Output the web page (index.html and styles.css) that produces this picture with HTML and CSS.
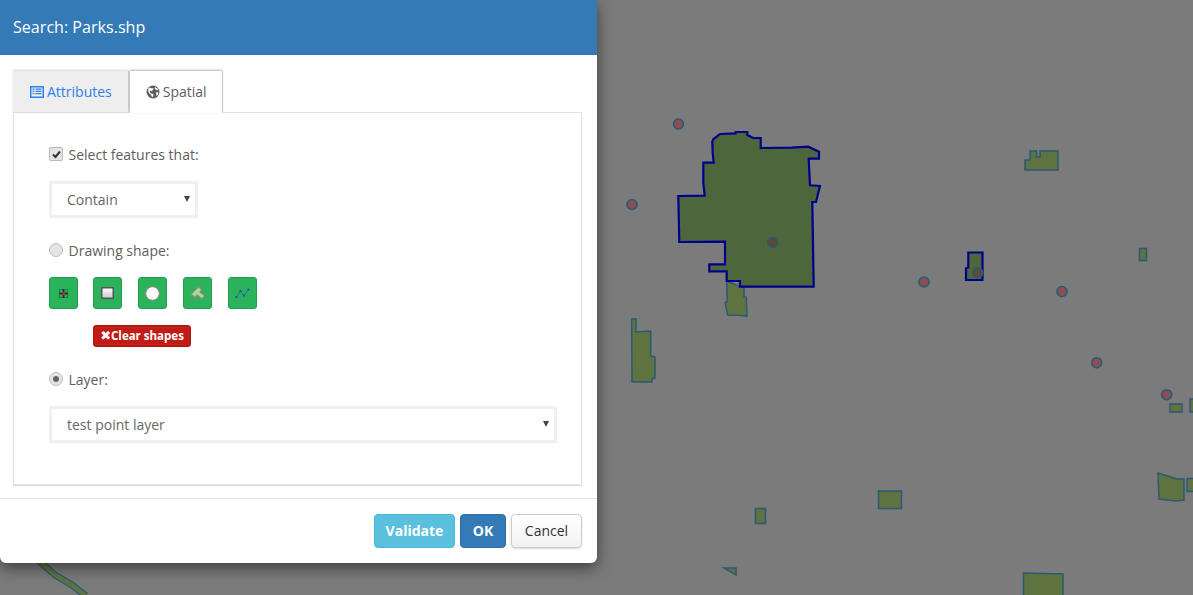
FILE: index.html
```html
<!DOCTYPE html>
<html lang="en">
<head>
<meta charset="utf-8">
<title>Search: Parks.shp</title>
<link rel="stylesheet" href="styles.css">
</head>
<body>
<svg class="map" width="1193" height="595" viewBox="0 0 1193 595">
  <g class="park">
    <path class="road-edge" d="M38 560 L55 575 L72 585 L86 596"/>
    <path class="road" d="M38 560 L55 575 L72 585 L86 596"/>
    <polygon points="726.7,281 727.3,301.7 725,302.7 727.7,315 739.3,315.3 747,316.3 746.3,297.3 744,296.7 744,287.7 740,286.7"/>
    <polygon points="631.7,319 636,319 636,332 650.7,331 650.7,356 655,357 655,378 652,379 652,382 632,382"/>
    <polygon points="1025,160 1030,160 1030,151 1036.7,151 1036.7,157 1040,157 1040,151 1058,151 1058,170 1025,170"/>
    <rect x="1139.5" y="248.5" width="7" height="12"/>
    <rect x="1170" y="404" width="12" height="8"/>
    <rect x="1190" y="399" width="8" height="13"/>
    <polygon points="1158,473 1177,479 1184,479 1184,500 1176,501 1159,499"/>
    <rect x="1187" y="478.500" width="10" height="13"/>
    <rect x="755.500" y="508.500" width="10" height="15"/>
    <rect x="878.500" y="491" width="23" height="17.500"/>
    <polygon points="724,568 736,568 736,575"/>
    <polygon points="1023.500,573 1063,574 1063,600 1023.500,600"/>
  </g>
  <g class="selected">
    <polygon points="735.7,133.300 720,134 713.300,139.300 712.300,141.700 712.700,153.300 713.700,162.700 703.300,162.700 703.300,183.300 704.700,195.700 678.300,196 679.300,242 725,241.700 725,264.300 709.300,264.300 709.300,271.300 726.700,271.300 726.700,281 740,281 740,286.700 813.700,286.700 812.300,202 816,202 820,186 810,185.300 808.700,158.700 819,158.700 819,151.700 808.300,146.700 791.700,147.700 760.700,148 760.700,138 753.300,138 747.300,135 747.300,132 735.700,132"/>
    <polygon points="968.300,252.500 982.500,252.500 982.500,280 966,280 966,268.300 968.300,267.500"/>
  </g>
  <g class="point">
    <circle cx="678.500" cy="124" r="5"/>
    <circle cx="632" cy="204.500" r="5"/>
    <circle class="dark" cx="772.700" cy="242.700" r="5"/>
    <circle class="dark" cx="977.700" cy="272.700" r="5"/>
    <circle cx="924" cy="282" r="5"/>
    <circle cx="1062" cy="291.500" r="5"/>
    <circle cx="1096.700" cy="362.700" r="5"/>
    <circle cx="1166.700" cy="394.700" r="5"/>
  </g>
</svg>

<section class="modal">
  <header class="modal-header">Search: Parks.shp</header>
  <div class="modal-body">
    <nav class="tabs">
      <a class="tab">
        <svg class="tab-icon" width="14" height="14" viewBox="0 0 14 14"><path class="list-icon" fill-rule="evenodd" d="M0 1h14v12H0zM1.500 2.500v9h11v-9zM2.500 3.500h2v1.300h-2zM5.500 3.500h6v1.300h-6zM2.500 5.700h2V7h-2zM5.500 5.700h6V7h-6zM2.500 7.900h2v1.300h-2zM5.500 7.900h6v1.300h-6z"/></svg>
        Attributes
      </a>
      <a class="tab active">
        <svg class="tab-icon" width="14" height="14" viewBox="0 0 14 14"><circle class="globe" cx="7" cy="7" r="6.500"/><path class="globe-land" d="M3 2.800c1.200-.4 2.400.1 3 .7l1.300-.4c.5.5.2 1.400-.6 1.700L6 6.200 4.600 5.600 3.700 6.800l1 1.600 2 .3.800 1.400-.8 2H6L5 9.800 2.800 8C2 6 2 4 3 2.800zM9 2l2.500 1.600.6 1.800-1.500-.5L9 4zM10 7.500l2.300-.3-.2 2.300-1.600 1.500z"/></svg>
        Spatial
      </a>
    </nav>
    <div class="panel">
      <label class="field-label first"><span class="check"><svg width="9" height="9" viewBox="0 0 9 9"><path class="tick" d="M1 4.500 L3.500 7 L8 1.500"/></svg></span>Select features that:</label>
      <div class="select small"><select><option>Contain</option></select></div>
      <label class="field-label drawing"><span class="radio"></span>Drawing shape:</label>
      <div class="tools">
        <button class="tool">
          <svg width="9" height="9" viewBox="0 0 9 9"><rect class="icon-handle" x=".5" y=".5" width="3" height="3"/><rect class="icon-handle" x="5.500" y=".5" width="3" height="3"/><rect class="icon-handle" x=".5" y="5.500" width="3" height="3"/><rect class="icon-handle" x="5.500" y="5.500" width="3" height="3"/><path class="icon-black" d="M4.500 0v9M0 4.500h9"/><circle class="icon-pink" cx="4.500" cy="4.500" r="1.700"/></svg>
        </button>
        <button class="tool">
          <svg width="13" height="12" viewBox="0 0 13 12"><defs><linearGradient id="rectFill" x1="0" y1="0" x2="0" y2="1"><stop offset="0" stop-color="#fff"/><stop offset="1" stop-color="#c9c9c9"/></linearGradient></defs><rect class="icon-rect" x=".75" y=".75" width="11.500" height="10.500" fill="url(#rectFill)"/></svg>
        </button>
        <button class="tool">
          <svg width="15" height="15" viewBox="0 0 15 15"><circle class="icon-circle" cx="7.500" cy="7.500" r="6.800"/></svg>
        </button>
        <button class="tool">
          <svg width="16" height="15" viewBox="0 0 16 15"><polygon class="icon-poly" points="1,8 7,2 9,1 12,4 10,6 15,10 12,13 7,9 5,12"/></svg>
        </button>
        <button class="tool">
          <svg width="15" height="11" viewBox="0 0 15 11"><polyline class="icon-line" points="1.500,9 5.500,3 9,7.500 13.500,1.500"/><rect class="icon-node" x=".5" y="8" width="2" height="2"/><rect class="icon-node" x="4.500" y="2" width="2" height="2"/><rect class="icon-node" x="8" y="6.500" width="2" height="2"/><rect class="icon-node" x="12.500" y=".5" width="2" height="2"/></svg>
        </button>
      </div>
      <div class="clear-row"><button class="clear"><span class="clear-x">✖</span>Clear shapes</button></div>
      <label class="field-label layer"><span class="radio on"></span>Layer:</label>
      <div class="select wide"><select><option>test point layer</option></select></div>
    </div>
  </div>
  <footer class="modal-footer">
    <button class="btn info">Validate</button>
    <button class="btn primary">OK</button>
    <button class="btn plain">Cancel</button>
  </footer>
</section>
</body>
</html>
```
FILE: styles.css
```css
* { box-sizing: border-box; }
html, body { margin: 0; height: 100%; }
body {
  position: relative;
  width: 1193px;
  height: 595px;
  overflow: hidden;
  background: #7b7b7b;
  font-family: "Open Sans", "Liberation Sans", sans-serif;
  font-size: 14px;
  color: #5e5e5e;
}
.map { position: absolute; left: 0; top: 0; display: block; }
.park polygon, .park rect { fill: #5f7340; stroke: #2a5a75; stroke-width: 1.500; }
.road-edge { fill: none; stroke: #2a5a75; stroke-width: 7; }
.road { fill: none; stroke: #5f7340; stroke-width: 4.500; }
.selected polygon { fill: #4d663c; stroke: #00008c; stroke-width: 2.200; stroke-linejoin: miter; }
.point circle { fill: #8a4f52; stroke: #2a5a75; stroke-width: 1.600; }
.point circle.dark { fill: #5d4b34; }

.modal {
  position: absolute;
  left: 0;
  top: 0;
  width: 597px;
  height: 563px;
  background: #fff;
  border-radius: 0 0 6px 6px;
  box-shadow: 0 5px 15px rgba(0, 0, 0, .5);
  display: flex;
  flex-direction: column;
}
.modal-header {
  height: 55px;
  padding: 16px 13px 0;
  background: #337ab7;
  color: #fff;
  font-size: 16.100px;
  line-height: 22px;
}
.modal-body { padding: 16px 15px 0 13px; height: 444px; border-bottom: 1px solid #e5e5e5; }

.tabs { display: flex; gap: 2px; height: 41px; position: relative; z-index: 1; }
.tab {
  display: flex;
  align-items: center;
  gap: 3px;
  padding: 0 16px 0 17px;
  height: 41px;
  background: #eee;
  color: #2f80ed;
  box-shadow: 0 -1px 2px rgba(0, 0, 0, .15), 1px 0 1px rgba(0, 0, 0, .15);
}
.tab.active {
  height: 42px;
  padding: 0 15px 1px 16px;
  background: #fff;
  color: #5e5e5e;
  box-shadow: 0 -1px 2px rgba(0, 0, 0, .3), 1px 0 0 #ddd, -1px 0 0 #ddd;
}
.tab-icon { display: block; flex: none; }
.list-icon { fill: #2f80ed; }
.globe { fill: #5e5e5e; }
.globe-land { fill: #fff; }

.panel {
  width: 569px;
  height: 373px;
  padding: 31px 24px 0 35px;
  background: #fff;
  border: 1px solid #e2e2e2;
  box-shadow: 0 1px 1px rgba(0, 0, 0, .12);
}
.field-label { display: flex; align-items: center; height: 20px; gap: 5.500px; }
.field-label.drawing { margin-top: 22px; }
.field-label.layer { margin-top: 22px; }
.check, .radio {
  width: 14px;
  height: 14px;
  flex: none;
  background: #e4e4e4;
  border: 1px solid #bbb;
  display: flex;
  align-items: center;
  justify-content: center;
}
.check { border-radius: 2px; }
.tick { fill: none; stroke: #333; stroke-width: 2; }
.radio { border-radius: 50%; }
.radio.on::after {
  content: "";
  width: 6px;
  height: 6px;
  border-radius: 50%;
  background: #666;
}

.select { position: relative; margin-top: 17px; }
.select.small { width: 149px; }
.select.wide { width: 508px; }
.select::after {
  content: "";
  position: absolute;
  right: 8px;
  top: 15px;
  border-left: 3px solid transparent;
  border-right: 3px solid transparent;
  border-top: 6px solid #444;
}
.select select {
  appearance: none;
  width: 100%;
  height: 37px;
  padding: 0 0 0 15px;
  background: #fff;
  border: 3px solid #f0f0f0;
  border-radius: 0;
  font: inherit;
  color: #666;
}

.tools { display: flex; gap: 16px; margin-top: 17px; }
.tool {
  width: 29px;
  height: 32px;
  padding: 0;
  background: #2bb35c;
  border: 1px solid #259c50;
  border-radius: 3px;
  display: flex;
  align-items: center;
  justify-content: center;
}
.tool:first-child { margin-right: -1px; }
.tool svg { display: block; }
.icon-black { stroke: #111; stroke-width: .8; fill: none; }
.icon-handle { fill: #2bb35c; stroke: #111; stroke-width: .7; stroke-dasharray: 1 1; }
.icon-pink { fill: #d4105e; }
.icon-rect { stroke: #555; stroke-width: 1.500; }
.icon-circle { fill: #fafafa; stroke: #888; stroke-width: 1; }
.icon-poly { fill: #a6dd99; stroke: #7f8f7f; stroke-width: 1.500; stroke-linejoin: round; }
.icon-line { fill: none; stroke: #3a6f5f; stroke-width: 1; }
.icon-node { fill: #0a54e8; }

.clear-row { margin-top: 16px; padding-left: 44px; }
.clear {
  display: block;
  width: 98px;
  height: 22px;
  padding: 0 0 2px;
  background: #c11d18;
  border: 1px solid #a81612;
  border-radius: 3px;
  color: #fff;
  font: bold 11.500px "Open Sans", "Liberation Sans", sans-serif;
  white-space: nowrap;
}
.clear-x { font-family: "DejaVu Sans", sans-serif; font-size: 13px; }

.modal-footer {
  display: flex;
  justify-content: flex-end;
  gap: 5px;
  padding: 15px 15px 0 0;
}
.btn {
  height: 34px;
  padding: 0 0 1px;
  border-radius: 4px;
  font: 14px "Open Sans", "Liberation Sans", sans-serif;
}
.btn.info { width: 81px; background: #5bc0de; border: 1px solid #46b8da; color: #fff; font-weight: 700; }
.btn.primary { width: 46px; background: #337ab7; border: 1px solid #2e6da4; color: #fff; font-weight: 700; }
.btn.plain { width: 71px; background: linear-gradient(#fff, #f2f2f2); border: 1px solid #ccc; color: #333; box-shadow: 0 1px 2px rgba(0, 0, 0, .15); }
```
